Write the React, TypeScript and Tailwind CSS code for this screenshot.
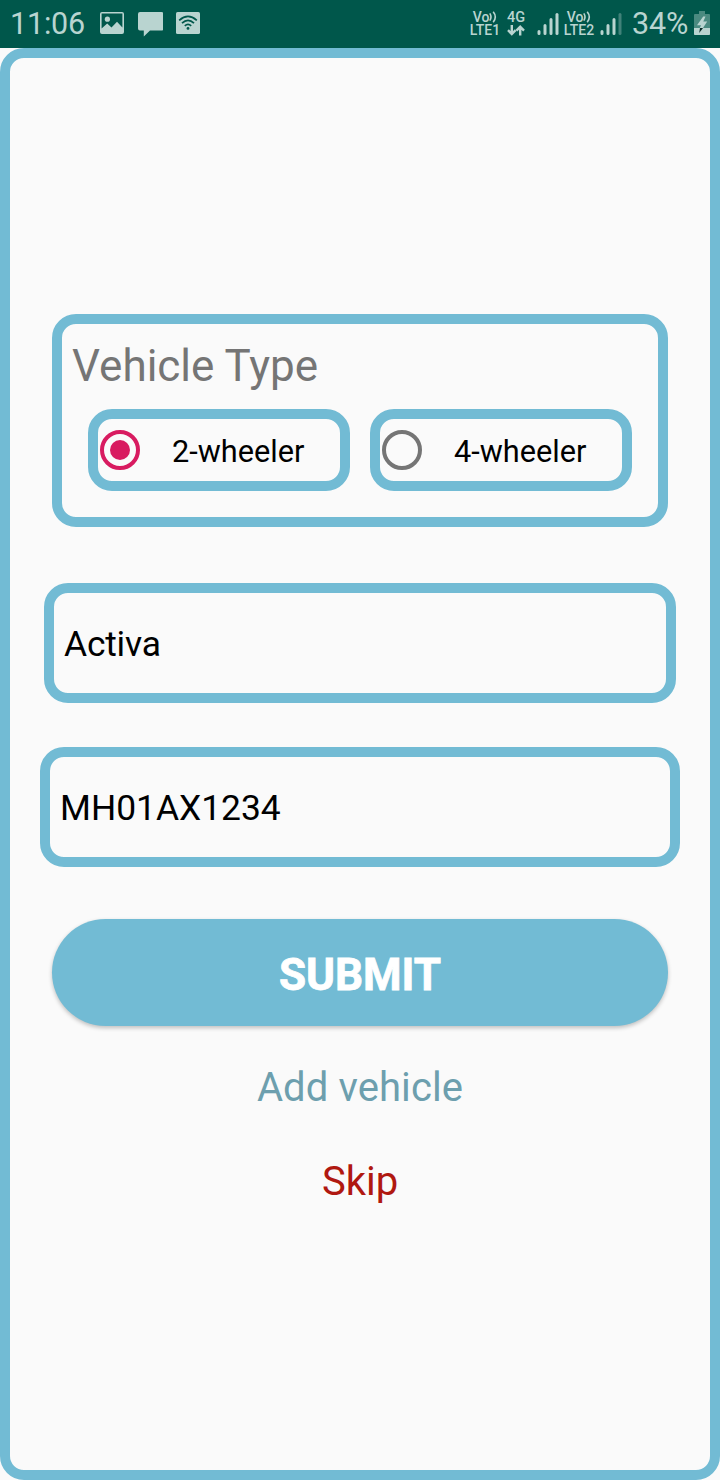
import type { ReactNode } from "react";

const roboto = "font-['Roboto','Liberation_Sans',sans-serif]";

function StatusLeft() {
  return (
    <div className="flex h-12 items-start">
      <span className="ml-[10px] block w-[90px] whitespace-nowrap text-[30.5px] leading-[48px] tracking-[-0.2px]">11:06</span>
      <svg className="mt-3" width="24" height="22" viewBox="0 0 24 22" fill="currentColor">
        <path fillRule="evenodd" d="M2 0H22Q24 0 24 2V20Q24 22 22 22H2Q0 22 0 20V2Q0 0 2 0ZM1.6 1.6V16.5L7.2 11.5L11.5 15.5L17 9.8L22.4 15.5V1.6Z" />
        <circle cx="7.4" cy="7.2" r="2.6" />
      </svg>
      <svg className="ml-[13.5px] mt-3" width="25.5" height="25" viewBox="0 0 25.5 25" fill="currentColor">
        <path d="M2 0H23.5Q25.5 0 25.5 2V16.5Q25.5 18.5 23.5 18.5H12L5.8 24.5V18.5H2Q0 18.5 0 16.5V2Q0 0 2 0Z" />
      </svg>
      <svg className="ml-[13px] mt-3" width="24" height="22" viewBox="0 0 24 22">
        <rect width="24" height="22" rx="1.6" fill="currentColor" />
        <g fill="none" stroke="#00574b" strokeWidth="1.7">
          <path d="M3.2 8.3Q12 .6 20.8 8.3" />
          <path d="M6 11.2Q12 5.6 18 11.2" />
          <path d="M8.8 13.9Q12 10.8 15.2 13.9" />
        </g>
        <circle cx="12" cy="16.4" r="1.4" fill="#00574b" />
      </svg>
    </div>
  );
}

function Volte({ name }: { name: string }) {
  return (
    <div className="w-[32px] pt-[11px] font-medium">
      <div className="flex h-[12px] items-center justify-center">
        <span className="text-[14px] leading-[12px]">Vo</span>
        <svg width="8" height="12" viewBox="0 0 8 12" fill="none" stroke="currentColor" strokeWidth="1.6">
          <path d="M.8 2.4Q3.2 6 .8 9.6M4.2 .8Q8.4 6 4.2 11.2" />
        </svg>
      </div>
      <div className="mt-px whitespace-nowrap text-center text-[14px] leading-[13px]">{name}</div>
    </div>
  );
}

function Signal({ weak }: { weak?: boolean }) {
  return (
    <svg className="mt-3 shrink-0" width="22" height="24" viewBox="0 0 22 24" stroke="currentColor" strokeWidth="3" strokeLinecap="round">
      <path d="M2 19.5V21.5M8 13.5V21.5M14 7.5V21.5" />
      <path d="M20 2.5V21.5" opacity={weak ? 0.35 : 1} />
    </svg>
  );
}

function StatusRight() {
  return (
    <div className="flex h-12 items-start">
      <Volte name="LTE1" />
      <div className="ml-[5px] w-[20px] pt-[11px] text-center font-medium">
        <div className="text-[14.5px] leading-[13px]">4G</div>
        <svg className="mx-auto mt-[1px]" width="18" height="11" viewBox="0 0 18 11" fill="none" stroke="currentColor" strokeWidth="2.4">
          <path d="M4.8 0V9M1 5.2L4.8 9L8.6 5.2M13.2 10.5V1.8M9.4 5.6L13.2 1.8L17 5.6" />
        </svg>
      </div>
      <div className="ml-[11px] flex"><Signal /></div>
      <div className="ml-[4px] flex"><Volte name="LTE2" /></div>
      <div className="ml-[5px] flex"><Signal weak /></div>
      <span className="ml-[10px] block w-[62px] whitespace-nowrap text-[30.5px] leading-[48px] tracking-[-0.2px]">34%</span>
      <svg className="mt-[11px]" width="16" height="24" viewBox="0 0 16 24">
        <path d="M5 0H11V3H15Q16 3 16 4V23Q16 24 15 24H1Q0 24 0 23V4Q0 3 1 3H5Z" fill="#4a8a80" />
        <path d="M0 17H16V23Q16 24 15 24H1Q0 24 0 23Z" fill="#b9d4d0" />
        <path d="M9.2 5.5L3 14.2H7L5.8 17H9L13.2 10.5H9.3L11.5 5.5Z" fill="#b9d4d0" />
        <path d="M6 17H9L5.2 22Z" fill="#092b27" />
      </svg>
    </div>
  );
}

function Outline({ className, children }: { className: string; children: ReactNode }) {
  return <div className={`rounded-[24px] border-[10px] border-[#72bbd4] ${className}`}>{children}</div>;
}

function RadioOption({ label, selected }: { label: string; selected?: boolean }) {
  return (
    <Outline className="flex h-[82px] w-[262px] items-center pl-[2px]">
      <span className={`flex size-10 items-center justify-center rounded-full border-4 ${selected ? "border-[#d81b60]" : "border-[#757575]"}`}>
        {selected && <span className="size-5 rounded-full bg-[#d81b60]" />}
      </span>
      <span className="ml-[31px] mt-[4px] whitespace-nowrap pl-px text-[30.7px] leading-9 text-black">{label}</span>
    </Outline>
  );
}

export default function App() {
  return (
    <div className={`flex h-[1480px] w-[720px] flex-col overflow-hidden bg-[#fafafa] ${roboto}`}>
      <header className="flex h-12 shrink-0 justify-between bg-[#00574b] pr-[10px] text-[#b9d4d0]">
        <StatusLeft />
        <StatusRight />
      </header>
      <main className="flex flex-1 flex-col items-center rounded-[24px] border-[10px] border-[#72bbd4] pt-[256px]">
        <Outline className="h-[213px] w-[616px]">
          <h1 className="ml-[10px] mt-[16px] h-[52px] text-[44px] leading-[52px] text-[#757575]">Vehicle Type</h1>
          <div className="ml-[26px] mt-[17px] flex gap-5">
            <RadioOption label="2-wheeler" selected />
            <RadioOption label="4-wheeler" />
          </div>
        </Outline>
        <Outline className="mt-[56px] flex h-[120px] w-[632px] items-center pl-[10px]">
          <span className="mt-[2px] text-[35.4px] leading-[42px] tracking-[-0.2px] text-black">Activa</span>
        </Outline>
        <Outline className="mt-[44px] flex h-[120px] w-[640px] items-center pl-[10px]">
          <span className="mt-[2px] text-[35.4px] leading-[42px] text-black">MH01AX1234</span>
        </Outline>
        <button className="mt-[52px] flex h-[107px] w-[616px] items-center justify-center rounded-full bg-[#72bbd4] pt-[4px] text-[44px] font-bold leading-[52px] text-white shadow-[0_2px_4px_rgba(0,0,0,0.24)] [-webkit-text-stroke:0.8px_white]">
          SUBMIT
        </button>
        <a className="mt-[38px] text-[40px] leading-[48px] tracking-[0.1px] text-[#6d9fae]">Add vehicle</a>
        <a className="mt-[46px] text-[40px] leading-[48px] text-[#b01810]">Skip</a>
      </main>
    </div>
  );
}
